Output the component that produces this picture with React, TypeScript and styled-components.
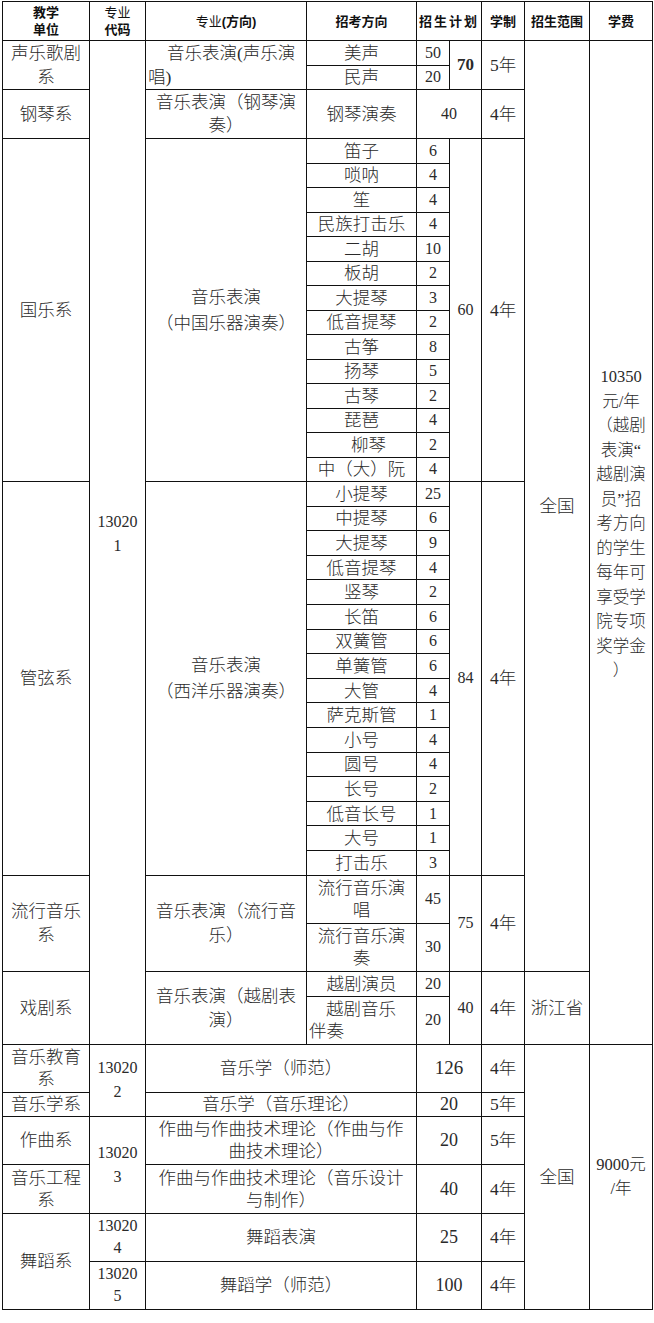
import React from 'react';
import styled, { createGlobalStyle } from 'styled-components';

// 招生计划表

const GlobalStyle = createGlobalStyle`
  html, body {
    margin: 0;
    padding: 0;
    background: #fff;
  }
  body {
    font-family: "Liberation Serif", "Noto Sans CJK SC", serif;
  }
`;

const Sheet = styled.div`
  padding: 1px 0 0 2px;
`;

const Table = styled.table`
  width: 650px;
  table-layout: fixed;
  border-collapse: collapse;
  font-family: "Liberation Serif", "Noto Sans CJK SC", serif;
  font-size: 17.5px;
  color: #2a2a2a;
`;

const Row = styled.tr<{ $h: number }>`
  height: ${p => p.$h}px;
`;

const Head = styled.th<{ $spaced?: boolean }>`
  border: 1px solid #111;
  padding: 0 2px;
  font-family: "Liberation Sans", "Noto Sans CJK SC", sans-serif;
  font-size: 13px;
  line-height: 17px;
  font-weight: 700;
  color: #111;
  text-align: center;
  vertical-align: middle;
  white-space: nowrap;
  letter-spacing: ${p => (p.$spaced ? '2px' : '0')};
`;

const Light = styled.span`
  font-weight: 400;
`;

const Cell = styled.td<{
  $align?: 'left' | 'center';
  $indent?: number;
  $size?: number;
  $bold?: boolean;
  $lh?: number;
  $lift?: number;
}>`
  border: 1px solid #111;
  padding: 0 2px ${p => p.$lift ?? 0}px;
  line-height: ${p => p.$lh ?? 22}px;
  text-align: ${p => p.$align ?? 'center'};
  text-indent: ${p => p.$indent ?? 0}px;
  font-size: ${p => p.$size ?? 17.5}px;
  font-weight: ${p => (p.$bold ? 700 : 300)};
  vertical-align: middle;
  white-space: nowrap;
`;

type Item = [string, number];

const guoyue: Item[] = [
  ['笛子', 6], ['唢呐', 4], ['笙', 4], ['民族打击乐', 4], ['二胡', 10], ['板胡', 2], ['大提琴', 3],
  ['低音提琴', 2], ['古筝', 8], ['扬琴', 5], ['古琴', 2], ['琵琶', 4], ['柳琴', 2], ['中（大）阮', 4],
];

const guanxian: Item[] = [
  ['小提琴', 25], ['中提琴', 6], ['大提琴', 9], ['低音提琴', 4], ['竖琴', 2], ['长笛', 6], ['双簧管', 6],
  ['单簧管', 6], ['大管', 4], ['萨克斯管', 1], ['小号', 4], ['圆号', 4], ['长号', 2], ['低音长号', 1],
  ['大号', 1], ['打击乐', 3],
];

const colWidths = [87, 56, 161, 110, 33, 32, 43, 65, 63];

const feeLines = ['10350', '元/年', '（越剧', '表演“', '越剧演', '员”招', '考方向', '的学生', '每年可', '享受学', '院专项', '奖学金', '）'];

const lines = (items: string[]) =>
  items.map((t, i) => (
    <React.Fragment key={i}>
      {i > 0 && <br />}
      {t}
    </React.Fragment>
  ));

const App: React.FC = () => {
  return (
    <Sheet>
      <GlobalStyle />
      <Table>
        <colgroup>
          {colWidths.map((w, i) => (
            <col key={i} style={{ width: w }} />
          ))}
        </colgroup>
        <tbody>
          <Row $h={39}>
            <Head>教学<br />单位</Head>
            <Head><Light>专业</Light><br />代码</Head>
            <Head><Light>专业</Light>(方向)</Head>
            <Head>招考方向</Head>
            <Head colSpan={2} $spaced>招生计划</Head>
            <Head>学制</Head>
            <Head>招生范围</Head>
            <Head>学费</Head>
          </Row>

          {/* 声乐歌剧系 */}
          <Row $h={24}>
            <Cell rowSpan={2} $lh={24}>声乐歌剧<br />系</Cell>
            <Cell rowSpan={37} $size={16} $lh={24} $lift={16}>13020<br />1</Cell>
            <Cell rowSpan={2} $align="left" $indent={19} $lh={24}>音乐表演(声乐演<br />唱)</Cell>
            <Cell>美声</Cell>
            <Cell $size={16}>50</Cell>
            <Cell rowSpan={2} $bold $size={17}>70</Cell>
            <Cell rowSpan={2}>5年</Cell>
            <Cell rowSpan={35}>全国</Cell>
            <Cell rowSpan={37} $size={16.5} $lh={24.5} $lift={36}>{lines(feeLines)}</Cell>
          </Row>
          <Row $h={24}>
            <Cell>民声</Cell>
            <Cell $size={16}>20</Cell>
          </Row>

          {/* 钢琴系 */}
          <Row $h={49}>
            <Cell>钢琴系</Cell>
            <Cell $lh={23}>音乐表演（钢琴演<br />奏）</Cell>
            <Cell>钢琴演奏</Cell>
            <Cell colSpan={2} $size={16}>40</Cell>
            <Cell>4年</Cell>
          </Row>

          {/* 国乐系 */}
          {guoyue.map(([name, n], i) => (
            <Row key={`gy-${name}`} $h={24.5}>
              {i === 0 && (
                <>
                  <Cell rowSpan={guoyue.length}>国乐系</Cell>
                  <Cell rowSpan={guoyue.length} $lh={26}>音乐表演<br />（中国乐器演奏）</Cell>
                </>
              )}
              <Cell $indent={name === '柳琴' ? 14 : 0}>{name}</Cell>
              <Cell $size={16}>{n}</Cell>
              {i === 0 && (
                <>
                  <Cell rowSpan={guoyue.length} $size={16}>60</Cell>
                  <Cell rowSpan={guoyue.length}>4年</Cell>
                </>
              )}
            </Row>
          ))}

          {/* 管弦系 */}
          {guanxian.map(([name, n], i) => (
            <Row key={`gx-${name}`} $h={24.6}>
              {i === 0 && (
                <>
                  <Cell rowSpan={guanxian.length}>管弦系</Cell>
                  <Cell rowSpan={guanxian.length} $lh={26}>音乐表演<br />（西洋乐器演奏）</Cell>
                </>
              )}
              <Cell>{name}</Cell>
              <Cell $size={16}>{n}</Cell>
              {i === 0 && (
                <>
                  <Cell rowSpan={guanxian.length} $size={16}>84</Cell>
                  <Cell rowSpan={guanxian.length}>4年</Cell>
                </>
              )}
            </Row>
          ))}

          {/* 流行音乐系 */}
          <Row $h={48}>
            <Cell rowSpan={2} $lh={24}>流行音乐<br />系</Cell>
            <Cell rowSpan={2} $lh={24}>音乐表演（流行音<br />乐）</Cell>
            <Cell>流行音乐演<br />唱</Cell>
            <Cell $size={16}>45</Cell>
            <Cell rowSpan={2} $size={16}>75</Cell>
            <Cell rowSpan={2}>4年</Cell>
          </Row>
          <Row $h={48}>
            <Cell>流行音乐演<br />奏</Cell>
            <Cell $size={16}>30</Cell>
          </Row>

          {/* 戏剧系 */}
          <Row $h={25}>
            <Cell rowSpan={2}>戏剧系</Cell>
            <Cell rowSpan={2} $lh={24}>音乐表演（越剧表<br />演）</Cell>
            <Cell>越剧演员</Cell>
            <Cell $size={16}>20</Cell>
            <Cell rowSpan={2} $size={16}>40</Cell>
            <Cell rowSpan={2}>4年</Cell>
            <Cell rowSpan={2}>浙江省</Cell>
          </Row>
          <Row $h={48}>
            <Cell $align="left" $indent={17}>越剧音乐<br />伴奏</Cell>
            <Cell $size={16}>20</Cell>
          </Row>

          {/* 130202 - 130205 */}
          <Row $h={48}>
            <Cell>音乐教育<br />系</Cell>
            <Cell rowSpan={2} $size={16} $lh={24}>13020<br />2</Cell>
            <Cell colSpan={2}>音乐学（师范）</Cell>
            <Cell colSpan={2} $size={19}>126</Cell>
            <Cell>4年</Cell>
            <Cell rowSpan={6}>全国</Cell>
            <Cell rowSpan={6} $size={16.5} $lh={24}>9000元<br />/年</Cell>
          </Row>
          <Row $h={24}>
            <Cell>音乐学系</Cell>
            <Cell colSpan={2}>音乐学（音乐理论）</Cell>
            <Cell colSpan={2} $size={18}>20</Cell>
            <Cell>5年</Cell>
          </Row>
          <Row $h={48}>
            <Cell>作曲系</Cell>
            <Cell rowSpan={2} $size={16} $lh={24}>13020<br />3</Cell>
            <Cell colSpan={2}>作曲与作曲技术理论（作曲与作<br />曲技术理论）</Cell>
            <Cell colSpan={2} $size={18}>20</Cell>
            <Cell>5年</Cell>
          </Row>
          <Row $h={49}>
            <Cell>音乐工程<br />系</Cell>
            <Cell colSpan={2}>作曲与作曲技术理论（音乐设计<br />与制作）</Cell>
            <Cell colSpan={2} $size={18}>40</Cell>
            <Cell>4年</Cell>
          </Row>
          <Row $h={48}>
            <Cell rowSpan={2}>舞蹈系</Cell>
            <Cell $size={16}>13020<br />4</Cell>
            <Cell colSpan={2}>舞蹈表演</Cell>
            <Cell colSpan={2} $size={18}>25</Cell>
            <Cell>4年</Cell>
          </Row>
          <Row $h={48}>
            <Cell $size={16}>13020<br />5</Cell>
            <Cell colSpan={2}>舞蹈学（师范）</Cell>
            <Cell colSpan={2} $size={18}>100</Cell>
            <Cell>4年</Cell>
          </Row>
        </tbody>
      </Table>
    </Sheet>
  );
};

export default App;
